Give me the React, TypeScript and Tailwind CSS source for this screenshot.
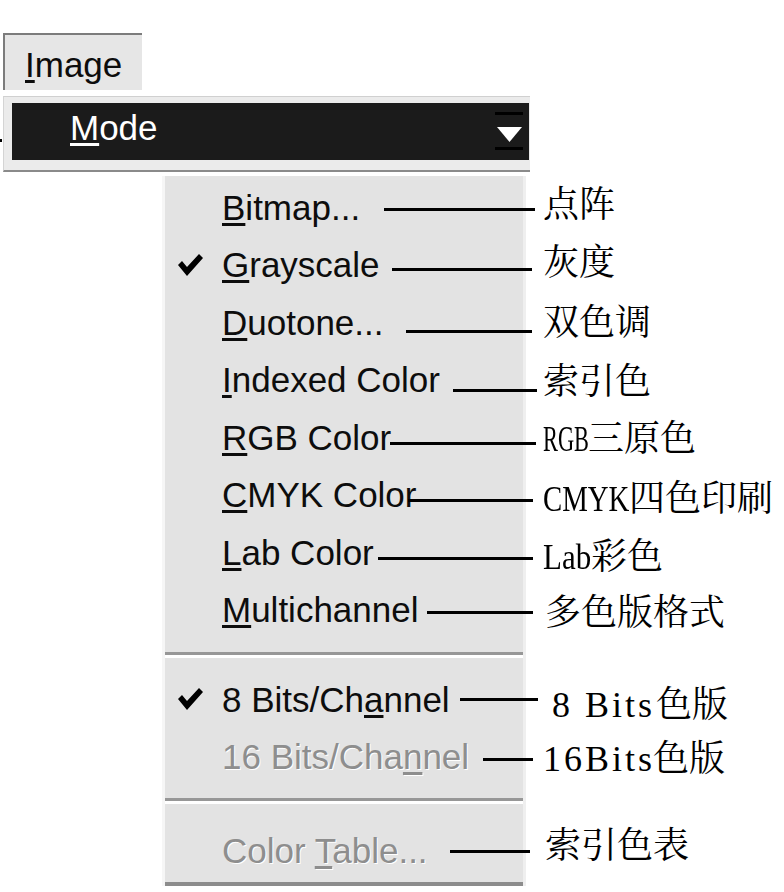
import React from "react";

const SANS = "font-['Liberation_Sans',Arial,sans-serif]";
const CJK = "font-['Liberation_Serif','Noto_Serif_CJK_SC','Noto_Sans_CJK_SC',serif]";

function U({ children }: { children: React.ReactNode }) {
  return <span className="underline decoration-[3px] underline-offset-[3px]">{children}</span>;
}

function Check() {
  return (
    <svg width="25" height="25" viewBox="0 0 25 25">
      <polygon points="0,12 4,8 9,14 21,1 25,5 9,23" fill="#000" />
    </svg>
  );
}

type Row = {
  text: React.ReactNode;
  check?: boolean;
  disabled?: boolean;
  textW: string;
  lineW: string;
  lineY: string;
  labelMl: string;
  labelY: string;
  label: React.ReactNode;
};

function Lat({ w, inner, children }: { w: string; inner: string; children: React.ReactNode }) {
  return (
    <span className={`inline-block whitespace-nowrap ${w}`}>
      <span className={`inline-block origin-left font-['Liberation_Serif',serif] ${inner}`}>{children}</span>
    </span>
  );
}

const rows1: Row[] = [
  { text: <><U>B</U>itmap...</>, textW: "w-[162px]", lineW: "w-[151px]", lineY: "translate-y-[2px]", labelMl: "ml-[8px]", labelY: "-translate-y-[3px]", label: "点阵" },
  { text: <><U>G</U>rayscale</>, check: true, textW: "w-[170px]", lineW: "w-[140px]", lineY: "translate-y-[4px]", labelMl: "ml-[11px]", labelY: "-translate-y-[2px]", label: "灰度" },
  { text: <><U>D</U>uotone...</>, textW: "w-[184px]", lineW: "w-[126px]", lineY: "translate-y-[9px]", labelMl: "ml-[11px]", labelY: "", label: "双色调" },
  { text: <><U>I</U>ndexed Color</>, textW: "w-[231px]", lineW: "w-[84px]", lineY: "translate-y-[10px]", labelMl: "ml-[6px]", labelY: "translate-y-[2px]", label: "索引色" },
  { text: <><U>R</U>GB Color</>, textW: "w-[168px]", lineW: "w-[146px]", lineY: "translate-y-[6px]", labelMl: "ml-[7px]", labelY: "translate-y-[1px]", label: <><Lat w="w-[45px]" inner="scale-x-[0.62]">RGB</Lat>三原色</> },
  { text: <><U>C</U>MYK Color</>, textW: "w-[186px]", lineW: "w-[125px]", lineY: "translate-y-[5px]", labelMl: "ml-[10px]", labelY: "translate-y-[4px]", label: <><Lat w="w-[86px]" inner="scale-x-[0.8]">CMYK</Lat>四色印刷</> },
  { text: <><U>L</U>ab Color</>, textW: "w-[156px]", lineW: "w-[155px]", lineY: "translate-y-[6px]", labelMl: "ml-[10px]", labelY: "translate-y-[4px]", label: <><Lat w="w-[48px]" inner="scale-x-[0.86]">Lab</Lat>彩色</> },
  { text: <><U>M</U>ultichannel</>, textW: "w-[205px]", lineW: "w-[106px]", lineY: "translate-y-[2px]", labelMl: "ml-[12px]", labelY: "translate-y-[3px]", label: "多色版格式" },
];

const rows2: Row[] = [
  { text: <>8 Bits/Ch<U>a</U>nnel</>, check: true, textW: "w-[238px]", lineW: "w-[78px]", lineY: "", labelMl: "ml-[14px]", labelY: "translate-y-[5px]", label: <><Lat w="w-[104px]" inner="tracking-[3px]">8 Bits</Lat>色版</> },
  { text: <>16 Bits/Cha<U>n</U>nel</>, disabled: true, textW: "w-[261px]", lineW: "w-[50px]", lineY: "translate-y-[2px]", labelMl: "ml-[10px]", labelY: "translate-y-[2px]", label: <><Lat w="w-[110px]" inner="tracking-[3px]">16Bits</Lat>色版</> },
];

const rows3: Row[] = [
  { text: <>Color <U>T</U>able...</>, disabled: true, textW: "w-[228px]", lineW: "w-[80px]", lineY: "translate-y-[1px]", labelMl: "ml-[15px]", labelY: "-translate-y-[5px]", label: "索引色表" },
];

function MenuRow({ r }: { r: Row }) {
  return (
    <div className="flex h-[57.5px] items-center">
      <div className="flex w-[57px] shrink-0 items-center pl-[13px]">{r.check ? <Check /> : null}</div>
      <div
        className={`shrink-0 whitespace-nowrap text-[35px] ${r.textW} ${
          r.disabled ? "text-[#8e8e8e] [text-shadow:1px_1px_0_#ffffff]" : "text-[#0d0d0d]"
        }`}
      >
        {r.text}
      </div>
      <div className={`h-[3px] shrink-0 bg-black ${r.lineW} ${r.lineY}`} />
      <div className={`shrink-0 whitespace-nowrap text-[36px] leading-none text-black ${CJK} ${r.labelMl} ${r.labelY}`}>
        {r.label}
      </div>
    </div>
  );
}

function Separator({ top, bottom }: { top: string; bottom: string }) {
  return (
    <div className={`${top} ${bottom}`}>
      <div className="h-[3px] bg-[#979797]" />
      <div className="h-[3px] bg-white" />
    </div>
  );
}

export default function App() {
  return (
    <div className={`h-[892px] w-[784px] overflow-hidden bg-white pt-[33px] ${SANS}`}>
      {/* Image menu title */}
      <div className="ml-[3px] flex h-[57px] w-[139px] items-center border-l-2 border-t-2 border-[#7c7c7c] bg-[#e6e6e6] pl-[20px] pt-[5px] text-[35px] text-[#0d0d0d]">
        <span>
          <U>I</U>mage
        </span>
      </div>

      {/* Mode row */}
      <div className="mt-[6px] flex">
        <div className="w-[3px] shrink-0">
          <div className="mt-[43px] h-[3px] w-[2px] bg-black" />
        </div>
        <div className="w-[527px] border-b-2 border-l border-t border-b-[#8a8a8a] border-l-[#d4d4d4] border-t-[#d0d0d0] bg-[#ebebeb] pb-[10px] pt-[6px]">
          <div className="ml-[8px] flex h-[57px] w-[517px] items-center justify-between bg-[#1b1b1b]">
            <div className="pb-[7px] pl-[58px] text-[35px] text-white">
              <U>M</U>ode
            </div>
            <div className="mr-[6px] flex w-[28px] flex-col items-center self-stretch pt-[9px]">
              <div className="h-[3px] w-[28px] bg-black" />
              <svg className="mt-[12px]" width="25" height="15" viewBox="0 0 25 15">
                <polygon points="0,0 25,0 12.5,15" fill="#ffffff" />
              </svg>
              <div className="mt-[5px] h-[3px] w-[28px] bg-black" />
            </div>
          </div>
        </div>
      </div>

      {/* Mode submenu */}
      <div className="ml-[162px] mt-[4px] w-[364px] border-l-[3px] border-r-[3px] border-l-[#f6f6f6] border-r-[#efefef] bg-[#e3e3e3] pt-[3px]">
        {rows1.map((r, i) => (
          <MenuRow key={i} r={r} />
        ))}
        <Separator top="pt-[13px]" bottom="pb-[13px]" />
        {rows2.map((r, i) => (
          <MenuRow key={i} r={r} />
        ))}
        <Separator top="pt-[12px]" bottom="pb-[18px]" />
        {rows3.map((r, i) => (
          <MenuRow key={i} r={r} />
        ))}
        <div className="mt-[2.5px] h-[4px] bg-[#8c8c8c]" />
      </div>
    </div>
  );
}
